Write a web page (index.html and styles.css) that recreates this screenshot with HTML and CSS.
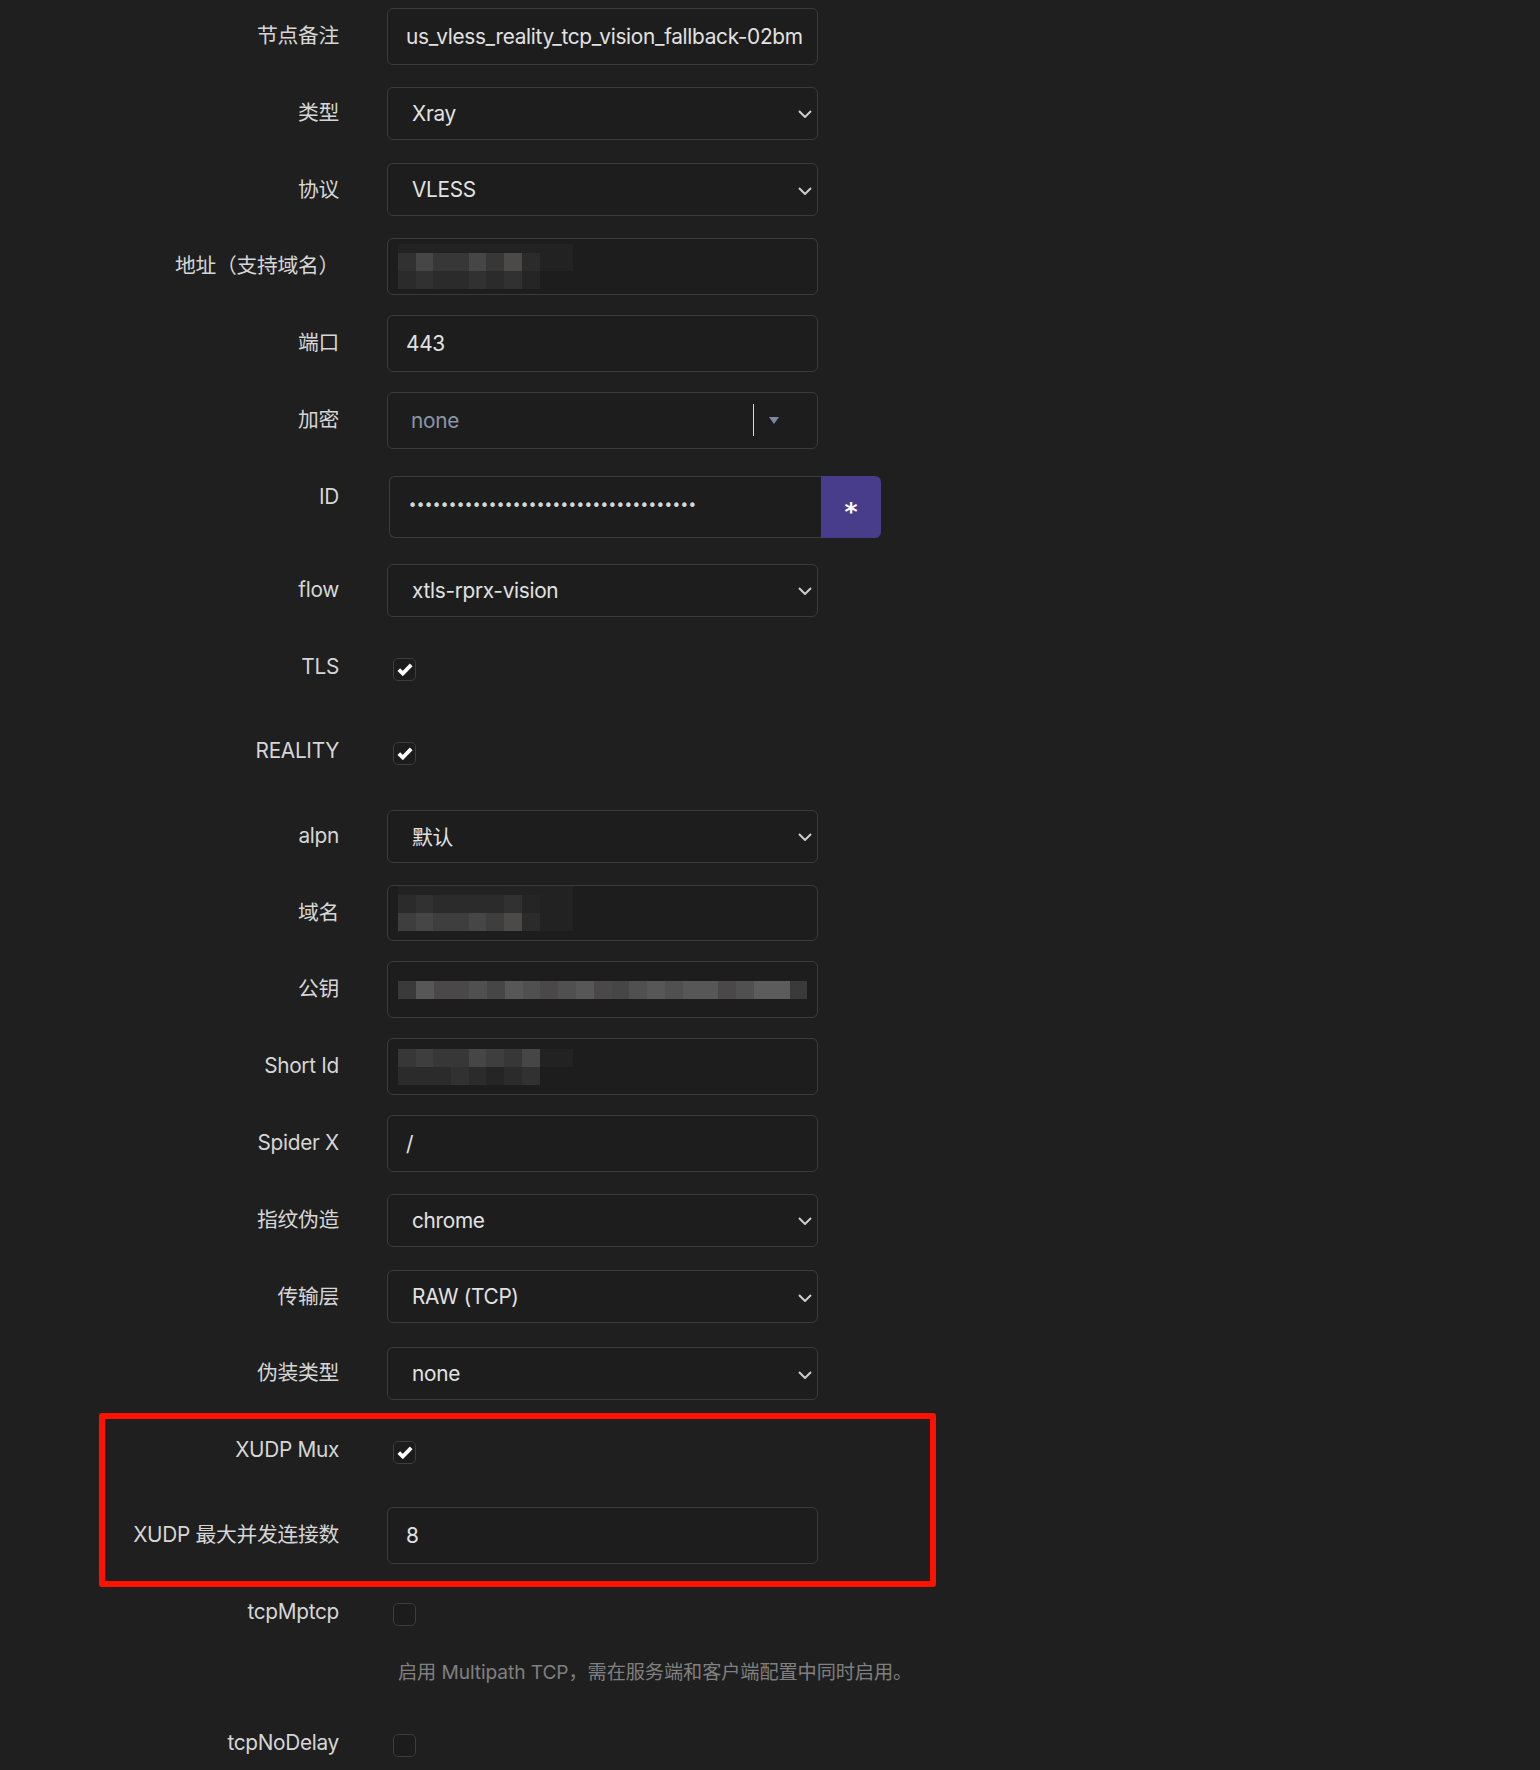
FILE: index.html
```html
<!DOCTYPE html>
<html lang="zh-CN">
<head>
<meta charset="utf-8">
<title>节点配置</title>
<link rel="stylesheet" href="styles.css">
</head>
<body>
<div class="form">
  <div class="row">
    <label class="label">节点备注</label>
    <input class="control text" value="us_vless_reality_tcp_vision_fallback-02bm">
  </div>
  <div class="row">
    <label class="label">类型</label>
    <div class="control select"><span>Xray</span><svg class="chev" width="14" height="8" viewBox="0 0 14 8"><path d="M1 1l6 6 6-6" fill="none" stroke="#cdcdcd" stroke-width="2"/></svg></div>
  </div>
  <div class="row">
    <label class="label">协议</label>
    <div class="control select"><span>VLESS</span><svg class="chev" width="14" height="8" viewBox="0 0 14 8"><path d="M1 1l6 6 6-6" fill="none" stroke="#cdcdcd" stroke-width="2"/></svg></div>
  </div>
  <div class="row">
    <label class="label">地址（支持域名）</label>
    <div class="control text fake">
      <div class="mosaic cols9">
        <span class="f"></span><span class="f"></span><span class="f"></span><span class="f"></span><span class="f"></span><span class="f"></span><span class="f"></span><span class="f"></span><span class="f"></span>
        <span class="g2"></span><span class="g5"></span><span class="g3"></span><span class="g3"></span><span class="g5"></span><span class="g3"></span><span class="g6"></span><span class="g1"></span><span class="f"></span>
        <span class="g1"></span><span class="g2"></span><span class="g1"></span><span class="g1"></span><span class="g2"></span><span class="g1"></span><span class="g2"></span><span class="g0"></span><span></span>
      </div>
    </div>
  </div>
  <div class="row">
    <label class="label">端口</label>
    <input class="control text" value="443">
  </div>
  <div class="row">
    <label class="label">加密</label>
    <div class="control vselect">
      <span class="placeholder">none</span>
      <span class="vs-actions"><span class="vs-sep"></span><svg width="10" height="7" viewBox="0 0 10 7"><path d="M0 0h10L5 7z" fill="#7b89a3"/></svg></span>
    </div>
  </div>
  <div class="row row-id">
    <label class="label">ID</label>
    <div class="group">
      <div class="group-input"><span class="dots">••••••••••••••••••••••••••••••••••••</span></div>
      <button class="group-btn" type="button">*</button>
    </div>
  </div>
  <div class="row">
    <label class="label">flow</label>
    <div class="control select"><span>xtls-rprx-vision</span><svg class="chev" width="14" height="8" viewBox="0 0 14 8"><path d="M1 1l6 6 6-6" fill="none" stroke="#cdcdcd" stroke-width="2"/></svg></div>
  </div>
  <div class="row row-check">
    <label class="label">TLS</label>
    <div class="field"><span class="check"><svg width="16" height="13" viewBox="0 0 16 13"><path d="M1.8 6.6l4 3.9 8.4-8.6" fill="none" stroke="#fff" stroke-width="3.8"/></svg></span></div>
  </div>
  <div class="row row-check">
    <label class="label">REALITY</label>
    <div class="field"><span class="check"><svg width="16" height="13" viewBox="0 0 16 13"><path d="M1.8 6.6l4 3.9 8.4-8.6" fill="none" stroke="#fff" stroke-width="3.8"/></svg></span></div>
  </div>
  <div class="row">
    <label class="label">alpn</label>
    <div class="control select"><span>默认</span><svg class="chev" width="14" height="8" viewBox="0 0 14 8"><path d="M1 1l6 6 6-6" fill="none" stroke="#cdcdcd" stroke-width="2"/></svg></div>
  </div>
  <div class="row">
    <label class="label">域名</label>
    <div class="control text fake">
      <div class="mosaic cols9 m-domain">
        <span class="f"></span><span class="f"></span><span class="f"></span><span class="f"></span><span class="f"></span><span class="f"></span><span class="f"></span><span class="f"></span><span class="f"></span>
        <span class="g1"></span><span class="g2"></span><span class="g1"></span><span class="g1"></span><span class="g1"></span><span class="g1"></span><span class="g2"></span><span class="g0"></span><span class="f"></span>
        <span class="g4"></span><span class="g5"></span><span class="g4"></span><span class="g4"></span><span class="g5"></span><span class="g4"></span><span class="g6"></span><span class="g1"></span><span class="f"></span>
      </div>
    </div>
  </div>
  <div class="row">
    <label class="label">公钥</label>
    <div class="control text fake">
      <div class="mosaic cols23 m-key">
        <span class="k1"></span><span class="k5"></span><span class="k3"></span><span class="k3"></span><span class="k4"></span><span class="k2"></span><span class="k5"></span><span class="k4"></span><span class="k3"></span><span class="k4"></span><span class="k5"></span><span class="k3"></span><span class="k2"></span><span class="k4"></span><span class="k5"></span><span class="k4"></span><span class="k5"></span><span class="k5"></span><span class="k3"></span><span class="k4"></span><span class="k6"></span><span class="k6"></span><span class="k1"></span>
      </div>
    </div>
  </div>
  <div class="row">
    <label class="label">Short Id</label>
    <div class="control text fake">
      <div class="mosaic cols9 m-short">
        <span class="g3"></span><span class="g4"></span><span class="g3"></span><span class="g3"></span><span class="g5"></span><span class="g4"></span><span class="g3"></span><span class="g5"></span><span class="f"></span>
        <span class="g1"></span><span class="g1"></span><span class="g1"></span><span class="g2"></span><span class="g1"></span><span class="g0"></span><span class="g1"></span><span class="g2"></span><span></span>
      </div>
    </div>
  </div>
  <div class="row">
    <label class="label">Spider X</label>
    <input class="control text" value="/">
  </div>
  <div class="row">
    <label class="label">指纹伪造</label>
    <div class="control select"><span>chrome</span><svg class="chev" width="14" height="8" viewBox="0 0 14 8"><path d="M1 1l6 6 6-6" fill="none" stroke="#cdcdcd" stroke-width="2"/></svg></div>
  </div>
  <div class="row">
    <label class="label">传输层</label>
    <div class="control select"><span>RAW (TCP)</span><svg class="chev" width="14" height="8" viewBox="0 0 14 8"><path d="M1 1l6 6 6-6" fill="none" stroke="#cdcdcd" stroke-width="2"/></svg></div>
  </div>
  <div class="row">
    <label class="label">伪装类型</label>
    <div class="control select"><span>none</span><svg class="chev" width="14" height="8" viewBox="0 0 14 8"><path d="M1 1l6 6 6-6" fill="none" stroke="#cdcdcd" stroke-width="2"/></svg></div>
  </div>
  <div class="highlight-group">
    <div class="row row-check">
      <label class="label">XUDP Mux</label>
      <div class="field"><span class="check"><svg width="16" height="13" viewBox="0 0 16 13"><path d="M1.8 6.6l4 3.9 8.4-8.6" fill="none" stroke="#fff" stroke-width="3.8"/></svg></span></div>
    </div>
    <div class="row">
      <label class="label">XUDP 最大并发连接数</label>
      <input class="control text" value="8">
    </div>
    <div class="annot"></div>
  </div>
  <div class="row row-check row-help">
    <label class="label">tcpMptcp</label>
    <div class="field">
      <span class="check off"></span>
      <p class="help">启用 Multipath TCP，需在服务端和客户端配置中同时启用。</p>
    </div>
  </div>
  <div class="row row-check">
    <label class="label">tcpNoDelay</label>
    <div class="field"><span class="check off"></span></div>
  </div>
</div>
</body>
</html>
```

FILE: styles.css
```css
html, body {
  margin: 0;
  padding: 0;
  background: #1f1f1f;
}

body {
  font-family: Inter, "Noto Sans CJK SC", sans-serif;
  font-size: 20.8px;
  letter-spacing: -0.3px;
  color: #d6d6d6;
}

.form {
  padding-top: 8px;
}

.row {
  display: grid;
  grid-template-columns: 339px 431px;
  column-gap: 48px;
  align-items: start;
  margin-bottom: 20px;
}

.label {
  display: block;
  text-align: right;
  line-height: 56.8px;
  white-space: nowrap;
  color: #d6d6d6;
}

.control {
  box-sizing: border-box;
  width: 431px;
  border: 1px solid #3b3b3b;
  border-radius: 6px;
  background: #1d1d1d;
  color: #e2e2e2;
  font: inherit;
  letter-spacing: -0.3px;
}

.text {
  height: 56.8px;
  padding: 0 10px 0 18px;
  outline: none;
}

.fake {
  display: flex;
  align-items: center;
  padding-left: 10px;
  overflow: hidden;
}

.select {
  height: 53px;
  margin-top: 1.9px;
  display: flex;
  align-items: center;
  justify-content: space-between;
  padding: 0 5px 0 24px;
}

.chev {
  display: block;
  margin-top: 2px;
}

.vselect {
  height: 56.8px;
  display: flex;
  align-items: center;
  justify-content: space-between;
  padding: 0 38px 0 23px;
}

.placeholder {
  color: #8b95a8;
}

.vs-actions {
  display: flex;
  align-items: center;
  gap: 15px;
}

.vs-sep {
  display: block;
  width: 1px;
  height: 32px;
  background: #d8d8d8;
}

/* ID group */
.row-id {
  height: 73px;
}

.group {
  display: flex;
  width: 492px;
  margin-top: 7.2px;
  margin-left: 2px;
}

.group-input {
  box-sizing: border-box;
  flex: 0 0 432px;
  height: 62px;
  border: 1px solid #3b3b3b;
  border-right: none;
  border-radius: 6px 0 0 6px;
  background: #1d1d1d;
  display: flex;
  align-items: center;
  padding-left: 18px;
  padding-bottom: 2px;
}

.dots {
  font-family: "DejaVu Sans", sans-serif;
  font-size: 15.5px;
  letter-spacing: -1.15px;
  color: #d4d8de;
}

.group-btn {
  flex: 0 0 60px;
  height: 62px;
  border: none;
  border-radius: 0 6px 6px 0;
  background: #483d8b;
  color: #ffffff;
  font-family: "DejaVu Sans", sans-serif;
  font-size: 25px;
  font-weight: 700;
  padding: 10px 0 0;
  cursor: pointer;
}

/* checkboxes */
.row-check {
  height: 64.6px;
}

.field {
  display: block;
}

.check {
  box-sizing: border-box;
  width: 23px;
  height: 23px;
  margin: 19px 0 0 6px;
  border: 1px solid #3d3d3d;
  border-radius: 5px;
  background: #1c1c1c;
  display: flex;
  align-items: center;
  justify-content: center;
}

.check svg {
  display: block;
}

.row-help {
  height: auto;
}

.help {
  margin: 33px 0 10.6px 11px;
  font-size: 19.2px;
  line-height: 26px;
  letter-spacing: -0.1px;
  color: #808080;
  white-space: nowrap;
}

/* highlight annotation */
.highlight-group {
  position: relative;
}

.annot {
  position: absolute;
  left: 99px;
  width: 837px;
  top: -9.2px;
  bottom: -23.4px;
  box-sizing: border-box;
  border: 6px solid #ff1100;
  border-radius: 3px;
  pointer-events: none;
}

/* mosaics (redacted values) */
.mosaic {
  display: grid;
  grid-auto-rows: 18px;
  grid-template-rows: 9px;
}

.cols9 {
  grid-template-columns: repeat(8, 17.7px) 33px;
}

.cols23 {
  grid-template-columns: repeat(23, 17.8px);
  grid-template-rows: 18px;
}

.m-domain {
  margin-top: -9px;
}

.m-short {
  grid-template-rows: 18px;
}

.f { background: #222222; }
.g0 { background: #252525; }
.g1 { background: #2b2b2b; }
.g2 { background: #313131; }
.g3 { background: #373737; }
.g4 { background: #3e3e3e; }
.g5 { background: #464646; }
.g6 { background: #4b4a49; }

.k1 { background: #3a3a3a; }
.k2 { background: #464646; }
.k3 { background: #4a4848; }
.k4 { background: #505050; }
.k5 { background: #575757; }
.k6 { background: #5d5c5c; }
```
